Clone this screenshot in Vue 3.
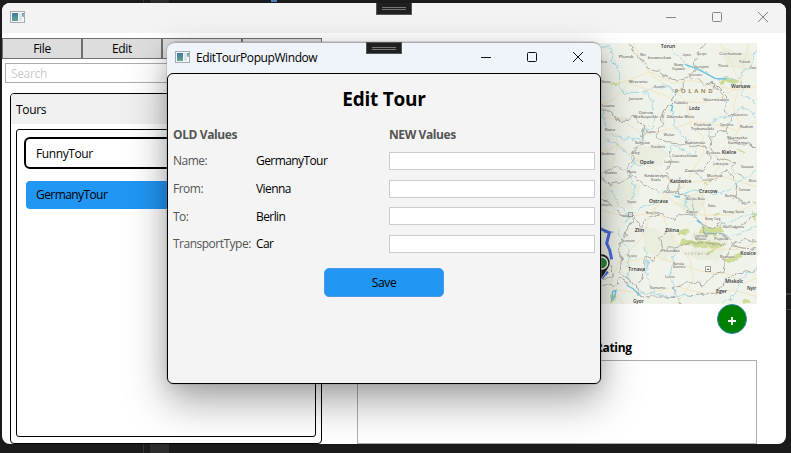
<script setup>
const menu = ['File', 'Edit', '', '']
const tours = ['FunnyTour', 'GermanyTour']
const fields = [
  ['Name:', 'GermanyTour'],
  ['From:', 'Vienna'],
  ['To:', 'Berlin'],
  ['TransportType:', 'Car']
]

// label, left, baseline, width, size
const places = [
  ['Torun', 212, 55, 44, 14], ['Inowroclaw', 173, 87, 70, 10], ['Plonsk', 86, 85, 45, 9], ['Nin', 150, 77, 18, 8],
  ['Lipno', 278, 79, 25, 8], ['Sierpc', 320, 76, 30, 8], ['Ciechanow', 388, 75, 66, 11], ['Pultusk', 448, 100, 32, 9],
  ['Nowy', 252, 107, 28, 8], ['Dwor', 480, 117, 20, 8], ['Kujawski', 247, 119, 38, 8], ['Gostynin', 312, 114, 44, 9],
  ['Plonsk', 385, 112, 30, 8], ['Krosniewice', 296, 139, 41, 8], ['Kosz', 32, 100, 20, 8], ['Wrzesnia', 116, 159, 56, 11],
  ['Gniez', 34, 159, 27, 9], ['Konin', 192, 175, 32, 10], ['Warsaw', 423, 173, 58, 15], ['Jarocin', 117, 210, 42, 11],
  ['Leszno', 36, 230, 38, 11], ['Poddebice', 252, 221, 42, 8], ['Skierniewice', 340, 213, 78, 11], ['Lodz', 297, 241, 32, 13],
  ['Ostrow', 146, 251, 43, 10], ['Wielkopolski', 130, 265, 74, 10], ['Zdunska Wola', 230, 265, 82, 11], ['Kozienice', 428, 257, 46, 8],
  ['Piotrkow', 312, 287, 52, 11], ['Trybunalski', 302, 299, 70, 10], ['Opoczno', 390, 287, 40, 8], ['Radom', 450, 293, 40, 11],
  ['Rawicz', 44, 303, 31, 8], ['Kepno', 168, 310, 29, 8], ['Wielun', 221, 319, 32, 9], ['Namyslow', 135, 341, 44, 8],
  ['Radomsko', 285, 343, 61, 11], ['Skarzysko', 412, 328, 60, 10], ['Kamienna', 414, 343, 59, 10], ['Kluczbork', 183, 355, 42, 8],
  ['Kielce', 395, 371, 44, 14], ['Swidnica', 33, 374, 40, 10], ['Brzeg', 125, 373, 23, 8], ['Czestochowa', 247, 380, 75, 11],
  ['Wloszczowa', 349, 373, 41, 8], ['Lubliniec', 223, 399, 45, 9], ['Opole', 149, 402, 43, 14], ['Jedrzejow', 370, 404, 45, 9],
  ['Staszow', 453, 413, 37, 8], ['Nysa', 111, 428, 28, 9], ['Zawiercie', 284, 426, 58, 11], ['Klodzko', 44, 433, 37, 8],
  ['Kedzierzyn', 163, 440, 68, 10], ['Kozle', 183, 453, 30, 9], ['Miechow', 351, 442, 46, 9], ['Katowice', 240, 460, 64, 14],
  ['Mielec', 476, 456, 24, 9], ['Zory', 234, 488, 27, 10], ['Cracow', 327, 488, 55, 14], ['Tarnow', 446, 484, 34, 9],
  ['Bochnia', 405, 500, 34, 9], ['Sumperk', 33, 529, 28, 8], ['Opava', 111, 518, 28, 9], ['Ostrava', 177, 519, 57, 14],
  ['Bielsko-Biala', 289, 511, 55, 8], ['Nowy Sacz', 399, 548, 63, 11], ['Rabka', 354, 530, 22, 8], ['Zywiec', 289, 548, 35, 8],
  ['Novy Jicin', 167, 551, 42, 8], ['Nowy Targ', 345, 570, 46, 9], ['Stara Lubovna', 398, 593, 64, 9], ['Zlin', 134, 606, 29, 14],
  ['Zilina', 225, 606, 42, 13], ['Liptovsky', 313, 620, 39, 8], ['Mikulas', 315, 629, 34, 8], ['Poprad', 373, 629, 42, 12],
  ['Brno', 41, 609, 29, 11], ['Trencin', 92, 635, 42, 9], ['Prievidza', 213, 667, 56, 9], ['Roznava', 390, 683, 44, 9],
  ['Kosice', 451, 675, 47, 13], ['Piestany', 111, 681, 29, 8], ['Banska', 250, 706, 32, 8], ['Stiavnica', 248, 715, 38, 8],
  ['Trnava', 115, 722, 51, 14], ['Levice', 225, 744, 30, 8], ['Miskolc', 406, 760, 54, 14], ['Komarno', 180, 777, 46, 9],
  ['Eger', 378, 789, 33, 15], ['Nyir', 471, 781, 28, 13], ['Gyor', 129, 818, 32, 14]
]

const roads = [
  'M33 155L75 162L120 150L180 125L250 160L300 150L360 165L440 180L500 170',
  'M33 225L70 210L115 160L180 180L235 200L270 215L340 218L400 200L450 165L475 40',
  'M130 39L155 95L190 140L250 180L290 215L300 280L340 320L340 370L310 420L280 470L220 500L180 560L150 630L90 690L60 760L100 822',
  'M75 310L85 345L120 370L145 390L200 420L250 460L330 455L400 440L500 470',
  'M33 260L95 270L160 315L250 295L310 275L360 280L440 300L500 275',
  'M450 165L430 230L450 290L420 350L395 400L350 460L335 500L350 570L330 620L360 655L450 660L500 635',
  'M33 540L110 560L180 550L230 500L290 540L340 555L420 555L500 520',
  'M90 700L135 690L200 680L260 700L340 725L410 730L460 760L500 745',
  'M80 780L170 790L260 770L340 790L430 780L500 800',
  'M390 39L420 90L450 165M33 370L85 345L60 420L33 455',
  'M260 822L310 750L300 690L240 610L220 560L180 550'
]
const rivers = [
  'M225 39L265 75L285 103L325 118L375 145L430 147L455 130L490 90L500 55',
  'M33 45L65 53L65 90L90 120L85 165L100 187L155 187L188 176L215 170L255 180L245 235L255 275L270 310L295 335',
  'M160 178L190 220L190 285L160 300L155 335L110 325L70 320L45 285L40 240',
  'M45 330L75 342L115 370L140 410L190 390M140 390L115 435L135 465L125 510',
  'M360 322L355 285L380 265L430 258L450 230L485 245L500 265',
  'M455 150L455 195L500 220M330 345L310 380L250 340L235 370',
  'M500 420L455 450L430 475L380 490L310 480L255 500L220 480',
  'M65 480L85 525L115 550L105 580L140 535L200 520',
  'M290 485L285 525L325 570L350 610L425 620L500 590',
  'M85 595L100 640L120 665L110 745L150 785L240 800L310 795',
  'M170 650L175 750L195 790M270 650L250 680L240 740L265 800',
  'M500 715L450 745L440 780L400 822M385 590L440 565L500 550'
]
const borders = [
  'M122 45L135 80L160 92L170 115L205 125L235 145L278 152L300 140L315 110L320 70L345 39',
  'M278 152L280 170L260 188L248 200L247 225L225 230L218 250L218 285L205 298L198 325L230 335L280 340L310 350L340 345L360 380L350 405L320 430L338 447L380 448L405 425L430 440L440 470L435 505L470 520L500 515',
  'M33 240L60 240L75 268L120 268L135 255L150 280L165 285L155 320L160 340L135 355L125 390L110 420L75 410L33 430',
  'M345 165L365 160L390 190L410 215L405 245L430 260L405 300L415 325L440 335L480 345L500 365',
  'M300 140L340 155L375 165L415 205M405 300L360 320L358 350L385 385L440 395L430 425L470 450',
  'M235 365L245 395L225 430L240 455L225 490L170 470L130 435L90 460L60 465L33 440',
  'M33 505L65 525L90 555L135 560L155 590L180 560L220 555L255 575L265 550L305 555L330 575L360 595L395 578L440 595L500 555',
  'M135 565L110 600L105 630L80 650L95 685L90 725L125 760L155 800L255 802L250 770L285 755L340 765L370 735L405 725L400 690L420 655L460 625L500 635',
  'M240 600L205 625L215 660L190 690L165 680L165 720L145 765M220 660L270 650L310 635L410 645',
  'M335 580L345 610L405 620L440 650L500 660M33 765L70 770L90 745L115 760',
  'M250 802L275 822M300 795L380 785L405 755L440 730L500 720',
  'M270 440L265 490L300 500L315 555M33 690L65 710L70 740L33 750'
]
const greens = [
  'M390 150L430 143L447 153L438 163L400 160Z', 'M62 158L82 155L83 166L68 168Z', 'M330 600L345 590L395 590L399 605L380 620L350 615L330 610Z',
  'M268 603L290 595L296 605L281 617L266 612Z', 'M270 645L275 632L320 628L340 633L390 637L410 645L382 650L363 675L350 665L375 650L335 647L300 650Z',
  'M405 684L455 674L454 685L415 700L402 695Z', 'M438 355L462 367L463 373L445 364Z', 'M370 550L391 548L384 560L370 556Z', 'M465 810L480 803L482 818L459 818Z',
  'M486 540L500 557L500 570L490 563Z', 'M345 460L354 454L352 468Z', 'M65 790L78 791L72 820L61 818Z'
]
const parks = ['M130 355L210 340L230 370L210 405L145 405Z', 'M155 590L245 610L270 650L220 695L165 660Z', 'M33 480L90 440L155 470L125 540L50 525Z', 'M310 600L420 620L385 700L295 680Z', 'M250 520L330 480L350 520L310 560Z', 'M390 55L490 70L480 120L410 110Z']
</script>

<template>
  <div class="desktop">
    <i class="code-tab"></i><i class="code-foot"></i><i class="code-mark"></i><i class="side-pane"></i>
    <section class="main-window">
      <header class="titlebar">
        <span class="app-icon"></span>
        <div class="controls">
          <svg viewBox="0 0 12 12"><path d="M1 6.5H11" /></svg>
          <svg viewBox="0 0 12 12"><rect x="1.5" y="1.5" width="9" height="9" rx="1" /></svg>
          <svg viewBox="0 0 12 12"><path d="M1 1L11 11M11 1L1 11" /></svg>
        </div>
        <span class="debug-bar"></span>
      </header>
      <div class="body">
        <aside class="left">
          <nav class="menu"><button v-for="(m, i) in menu" :key="i">{{ m }}</button></nav>
          <div class="search">Search</div>
          <div class="group">
            <div class="group-head">Tours</div>
            <div class="list">
              <div v-for="(t, i) in tours" :key="t" class="tour" :class="{ outlined: i === 0, selected: i === 1 }"><span>{{ t }}</span></div>
            </div>
          </div>
        </aside>
        <main class="right">
          <svg class="map" viewBox="-699 39 1200 783" preserveAspectRatio="none">
            <defs>
              <filter id="wiggle" filterUnits="userSpaceOnUse" x="-699" y="39" width="1200" height="783">
                <feTurbulence type="fractalNoise" baseFrequency="0.045" numOctaves="2" seed="4" />
                <feDisplacementMap in="SourceGraphic" scale="24" xChannelSelector="R" yChannelSelector="G" />
              </filter>
            </defs>
            <rect x="-699" y="39" width="1200" height="783" fill="#f0f3e9" />
            <g filter="url(#wiggle)">
              <path v-for="p in parks" :key="p" :d="p" fill="#e9eedf" />
              <path v-for="p in greens" :key="p" :d="p" fill="#ccdb96" />
            </g>
            <path v-for="p in roads" :key="p" :d="p" class="road" />
            <g filter="url(#wiggle)">
              <path v-for="p in rivers" :key="p" :d="p" class="river" />
              <path v-for="p in borders" :key="p" :d="p" class="border" />
            </g>
            <path d="M110 765L130 777L152 797M68 785L78 781L74 800L66 810ZM243 225L248 230L243 244M320 572L330 577M255 500L270 501M285 103L325 118L375 145L410 147" class="lake" />
            <text v-for="(p, i) in places" :key="i" class="place" :class="{ city: p[4] > 12 }" :x="p[1]" :y="p[2]" :font-size="p[4]" :textLength="p[3]" lengthAdjust="spacingAndGlyphs">{{ p[0] }}</text>
            <text x="254" y="190" font-size="18" textLength="114" class="country">POLAND</text>
            <text x="284" y="676" font-size="10" textLength="72" class="country small">SLOVAKIA</text>
            <rect x="347" y="710" width="15" height="15" fill="#fff" stroke="#777" stroke-width="2" /><path d="M351 718H358" stroke="#555" stroke-width="3" />
            <rect x="115" y="547" width="13" height="13" fill="#ddd" stroke="#888" stroke-width="2" />
            <path d="M20 590L40 600L58 608L50 640L59 660L65 688M33 745L53 725" class="route" />
            <path d="M33 748L12 715A27 27 0 1 1 57 711L40 738Z" fill="#222" stroke="#fff" stroke-width="2" />
            <circle cx="35" cy="699" r="18" fill="#2d8c35" stroke="#fff" stroke-width="4" />
          </svg>
          <button class="add"><svg viewBox="0 0 10 10"><path d="M5 1V9M1 5H9" /></svg></button>
          <div class="rating">Rating</div>
          <div class="log-box"></div>
        </main>
      </div>
    </section>

    <section class="popup">
      <header class="titlebar">
        <span class="app-icon"></span><span class="caption">EditTourPopupWindow</span>
        <div class="controls">
          <svg viewBox="0 0 12 12"><path d="M1 6.5H11" /></svg>
          <svg viewBox="0 0 12 12"><rect x="1.5" y="1.5" width="9" height="9" rx="1" /></svg>
          <svg viewBox="0 0 12 12"><path d="M1 1L11 11M11 1L1 11" /></svg>
        </div>
        <span class="debug-bar"></span>
      </header>
      <div class="form">
        <h1>Edit Tour</h1>
        <div class="heads"><b>OLD Values</b><b>NEW Values</b></div>
        <div v-for="f in fields" :key="f[0]" class="row">
          <label>{{ f[0] }}</label><span>{{ f[1] }}</span><input type="text" />
        </div>
        <button class="save">Save</button>
      </div>
    </section>
  </div>
</template>

<style>
body { margin: 0; overflow: hidden; }
</style>

<style scoped>
* { box-sizing: border-box; }
.desktop { position: relative; width: 791px; height: 453px; padding: 3px 5px 9px 2px; overflow: hidden; background: #1b1b1b; font: 12px "Open Sans", "Noto Sans", sans-serif; letter-spacing: -0.35px; color: #000; }
button { font: inherit; letter-spacing: inherit; color: inherit; padding: 0; }
.code-tab, .code-foot, .code-mark, .side-pane { position: absolute; }
.code-tab { left: 143px; top: 0; width: 26px; height: 3px; border-left: 1px solid #333; background: linear-gradient(90deg, #1b1b1b 6px, #2c2c2c 6px); }
.code-foot { left: 143px; bottom: 0; width: 26px; height: 9px; border-left: 1px solid #333; background: linear-gradient(90deg, #1b1b1b 6px, #2c2c2c 6px); }
.code-mark { left: 271px; top: 0; width: 6px; height: 2px; background: #4b7fc0; }
.side-pane { right: 0; top: 293px; width: 5px; height: 17px; border: solid #3a3a3a; border-width: 2px 0 1px; }
.main-window { display: flex; flex-direction: column; width: 784px; height: 441px; border-radius: 8px; background: #fff; overflow: hidden; }
.titlebar { position: relative; flex: none; height: 30px; display: flex; align-items: center; padding: 0 0 2px 8px; background: #f3f3f3; }
.app-icon { width: 15px; height: 12px; border: 1px solid #a3abb3; background: linear-gradient(#3d78a8, #62a98b) 1px 1px / 6px 8px no-repeat, linear-gradient(#dfe4e5, #dfe4e5) 8px 1px / 3px 8px no-repeat, linear-gradient(#5f9ab5, #9cc9ad) 11px 1px / 2px 4px no-repeat, #f6f7f8; }
.controls { display: flex; gap: 34px; margin-left: auto; margin-right: 17px; }
.controls svg { width: 12px; height: 12px; fill: none; stroke: #858585; stroke-width: 1; }
.debug-bar { position: absolute; top: 0; left: 374px; width: 36px; height: 12px; border: 1px solid #555; border-top: 0; background: linear-gradient(#777, #777) 5px 4px / 24px 1px no-repeat, linear-gradient(#777, #777) 5px 6px / 24px 1px no-repeat, #202020; }
.body { flex: 1; min-height: 0; display: flex; gap: 35px; }
.left { width: 320px; padding-top: 5px; display: flex; flex-direction: column; }
.menu { display: grid; grid-template-columns: repeat(4, 80px); height: 20px; }
.menu button { border: 1px solid #707070; background: #ddd; line-height: 18px; padding-top: 1px; }
.search { height: 20px; margin: 5px 0 0 3px; padding-left: 5px; border: 1px solid #abadb3; line-height: 20px; color: #ccc; }
.group { flex: 1; margin: 10px 0 0 8px; border: 1px solid #000; border-radius: 4px; padding-bottom: 6px; display: flex; flex-direction: column; overflow: hidden; }
.group-head { height: 30px; padding-left: 5px; line-height: 32px; background: #f0f0f0; }
.list { flex: 1; margin: 5px 5px 0; border: 1px solid #000; border-radius: 3px; padding: 7px; display: flex; flex-direction: column; gap: 12px; }
.tour { height: 28px; margin: 0 2px; padding-left: 10px; line-height: 28px; border-radius: 4px; letter-spacing: -.58px; }
.tour.outlined { height: 32px; margin: 0; padding-left: 10px; border: 2px solid #000; border-radius: 6px; line-height: 29px; letter-spacing: -.4px; }
.tour.selected { background: #2196f3; }
.right { width: 400px; padding-top: 10px; display: flex; flex-direction: column; }
.map { display: block; width: 400px; height: 261px; flex: none; }
.road { fill: none; stroke: #f5dfb4; stroke-width: 2.2; }
.river { fill: none; stroke: #a5d7e6; stroke-width: 2.8; stroke-linejoin: round; }
.border { fill: none; stroke: #9c9b98; stroke-width: 2.4; stroke-linejoin: round; }
.lake { fill: none; stroke: #6cc2df; stroke-width: 4; }
.place { fill: #454543; stroke: #f3f4ed; stroke-width: 1.2; paint-order: stroke; letter-spacing: 0; font-weight: 500; }
.city { fill: #2d2d2d; font-weight: 600; }
.country { fill: #a18a5f; font-weight: 700; letter-spacing: 0; }
.country.small { fill: #b1a17e; font-weight: 400; }
.route { fill: none; stroke: #4a6bdb; stroke-width: 9; stroke-linejoin: round; }
.add { align-self: flex-end; margin-right: 10px; width: 30px; height: 30px; border: 1px solid #3586b8; border-radius: 50%; background: #008000; display: flex; align-items: center; justify-content: center; }
.add svg { width: 10px; height: 10px; margin-top: 4px; stroke: #fff; stroke-width: 1.8; }
.rating { padding: 5px 0 0 238px; height: 26px; font-weight: 700; line-height: 18px; }
.log-box { height: 84px; border: 1px solid #abadb3; }
.popup { position: absolute; left: 167px; top: 42px; width: 434px; height: 342px; border-radius: 8px 8px 6px 6px; background: #eff3fa; display: flex; flex-direction: column; box-shadow: 0 0 0 .5px #8888, 0 18px 40px rgba(0,0,0,.34), 0 3px 18px rgba(0,0,0,.1); }
.popup .titlebar { height: 31px; background: #eff3fa; border-top: 1px solid #aaa; border-radius: 8px 8px 0 0; }
.popup .controls svg { stroke: #111; }
.popup .debug-bar { left: 199px; top: -1px; border-top: 1px solid #555; }
.caption { margin-left: 6px; margin-top: 1px; letter-spacing: -.42px; }
.form { flex: 1; border: 1px solid #000; border-radius: 6px; background: #f4f4f4; padding: 10px 5px 0; display: flex; flex-direction: column; }
h1 { margin: 0; height: 32px; line-height: 31px; font-size: 19px; font-weight: 700; letter-spacing: -.25px; text-align: center; }
.heads { display: grid; grid-template-columns: 216px 206px; height: 31px; line-height: 37px; color: #555; letter-spacing: -.4px; }
.row { display: grid; grid-template-columns: 83px 133px 206px; align-items: center; height: 27.7px; letter-spacing: -.58px; }
.row label { color: #555; white-space: nowrap; letter-spacing: -.5px; }
input { width: 206px; height: 18px; border: 1px solid #ccc; background: #fff; padding: 0; }
.save { align-self: center; width: 120px; height: 29px; margin-top: 10px; border: 1px solid #4b9ae5; border-radius: 5px; background: #2196f3; }
</style>
